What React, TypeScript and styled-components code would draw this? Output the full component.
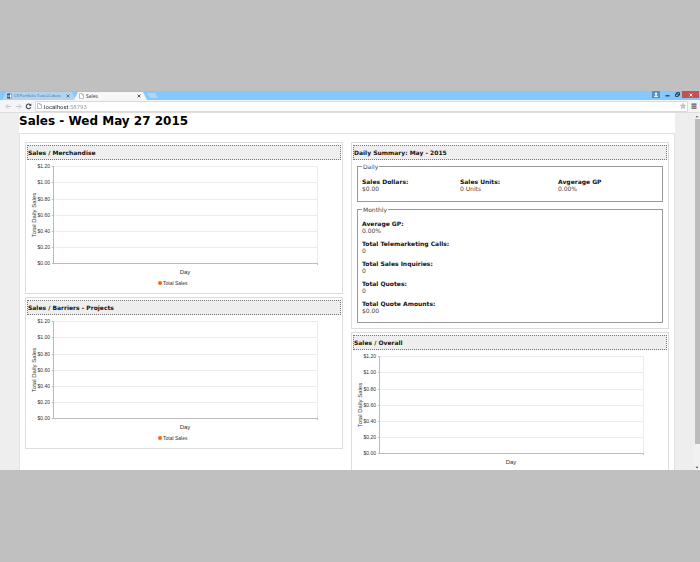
import React from "react";
import styled, { createGlobalStyle, css } from "styled-components";

const GlobalStyle = createGlobalStyle`
  * { box-sizing: border-box; }
  body {
    margin: 0;
    background: #c0c0c0;
    font-family: "DejaVu Sans", Verdana, sans-serif;
    font-size: 6px;
    line-height: 7px;
    color: #444;
  }
  button { border: 0; padding: 0; background: none; font: inherit; color: inherit; }
`;

const Desktop = styled.div`
  min-height: 100vh;
  display: flex;
  flex-direction: column;
  justify-content: center;
  padding-bottom: 1px;
`;

const BrowserWindow = styled.div`
  display: flex;
  flex-direction: column;
  background: #eee;
`;

const TabStrip = styled.div`
  display: flex;
  align-items: flex-end;
  height: 9px;
  padding-left: 2px;
  background: #84c8ff;
`;

const Tab = styled.button<{ $active?: boolean }>`
  display: flex;
  align-items: center;
  gap: 2px;
  width: ${(p) => (p.$active ? 73 : 74)}px;
  height: 8px;
  padding: 0 6px 0 5px;
  margin-right: -2px;
  font-family: "Open Sans", sans-serif;
  font-size: ${(p) => (p.$active ? 5 : 4)}px;
  line-height: 8px;
  text-align: left;
  white-space: nowrap;
  clip-path: polygon(0 100%, 4px 0, calc(100% - 4px) 0, 100% 100%);
  background: ${(p) => (p.$active ? "#f7f7f7" : "#b3d4ef")};
  color: ${(p) => (p.$active ? "#333" : "#4d6378")};
`;

const TabTitle = styled.span`
  flex: 1;
`;

const NewTab = styled.button`
  width: 11px;
  height: 5px;
  margin: 0 0 2px 2px;
  border-radius: 1px;
  clip-path: polygon(0 0, calc(100% - 3px) 0, 100% 100%, 3px 100%);
  background: #b3d4ef;
`;

const WindowControls = styled.div`
  display: flex;
  align-self: flex-start;
  margin-left: auto;
  padding-right: 1px;
`;

const WindowButton = styled.button<{ $kind?: "user" | "close" }>`
  display: flex;
  align-items: center;
  justify-content: center;
  width: 10px;
  height: 7px;
  ${(p) => p.$kind === "user" && css`width: 8px; margin-right: 2px; background: #5a8db8;`}
  ${(p) => p.$kind === "close" && css`width: 17px; background: #c75050;`}
`;

const Toolbar = styled.div`
  display: flex;
  align-items: center;
  height: 13px;
  padding: 0 3px 0 5px;
  background: #f5f5f5;
  border-bottom: 1px solid #ddd;
`;

const NavButton = styled.button`
  display: flex;
  width: 8px;
  margin-right: 2px;
`;

const AddressBar = styled.label`
  display: flex;
  align-items: center;
  flex: 1;
  gap: 2px;
  height: 11px;
  padding: 0 1px;
  margin-right: 3px;
  background: #fff;
  border: 1px solid #dadada;
  border-radius: 1px;
`;

const AddressInput = styled.input`
  flex: 1;
  min-width: 0;
  height: 9px;
  padding: 0;
  border: 0;
  outline: 0;
  font-family: Roboto, sans-serif;
  font-size: 6px;
  color: transparent;
  background: linear-gradient(90deg, #222 24px, #999 24px);
  background-clip: text;
  -webkit-background-clip: text;
`;

const Viewport = styled.div`
  display: flex;
  height: 357px;
  overflow: hidden;
`;

const Page = styled.main`
  flex: 1;
  min-width: 0;
  padding: 0 19px;
`;

const PageTitle = styled.h1`
  margin: 0;
  height: 20px;
  background: #fff;
  color: #000;
  font-size: 12px;
  line-height: 16px;
`;

const Board = styled.div`
  display: grid;
  grid-template-columns: 1fr 1fr;
  align-items: start;
  gap: 8px;
  min-height: 360px;
  padding: 8px 5px;
  background: #fff;
  border: 1px solid #e2e2e2;
`;

const Column = styled.div`
  display: flex;
  flex-direction: column;
  gap: 3px;
  min-width: 0;
`;

const Panel = styled.section`
  padding: 2px 1px 0;
  border: 1px solid #ddd;
`;

const PanelTitle = styled.h2`
  margin: 0;
  height: 15px;
  border: 1px dotted #777;
  background: #eee;
  color: #111;
  font-size: 6px;
  line-height: 13px;
`;

const ChartSvg = styled.svg`
  display: block;
  width: 100%;
  font-family: "Liberation Sans", Arial, sans-serif;
  font-size: 5px;
  fill: #333;
`;

const AxisTitle = styled.text`
  font-size: 6px;
  text-anchor: middle;
`;

const SummaryBody = styled.div`
  display: flex;
  flex-direction: column;
  gap: 4px;
  padding: 3px 4px 5px;
`;

const Group = styled.fieldset<{ $columns?: number }>`
  display: grid;
  grid-template-columns: repeat(${(p) => p.$columns ?? 1}, 1fr);
  gap: 6px;
  margin: 0;
  min-width: 0;
  padding: ${(p) => (p.$columns ? "8px 12px 9px 4px" : "7px 12px 8px 4px")};
  border: 1px solid #999;
`;

const GroupName = styled.legend`
  padding: 0 1px;
`;

const Stat = styled.dl`
  margin: 0;
`;

const StatLabel = styled.dt`
  font-weight: bold;
  color: #111;
`;

const StatValue = styled.dd`
  margin: 0;
`;

const Scrollbar = styled.div`
  display: flex;
  flex-direction: column;
  align-items: center;
  width: 6px;
  background: #f1f1f1;
`;

const ScrollButton = styled.button`
  display: flex;
  align-items: center;
  justify-content: center;
  width: 6px;
  height: 6px;
`;

const ScrollThumb = styled.div`
  width: 5px;
  height: 325px;
  margin-bottom: auto;
  background: #bcbcbc;
`;

const ticks = ["$1.20", "$1.00", "$0.80", "$0.60", "$0.40", "$0.20", "$0.00"];
const tickY = [6, 22, 39, 55, 71, 87, 103];

const monthly = [
  ["Average GP:", "0.00%"],
  ["Total Telemarketing Calls:", "0"],
  ["Total Sales Inquiries:", "0"],
  ["Total Quotes:", "0"],
  ["Total Quote Amounts:", "$0.00"],
];

const daily = [
  ["Sales Dollars:", "$0.00"],
  ["Sales Units:", "0 Units"],
  ["Avgerage GP", "0.00%"],
];

function Stats({ items }: { items: string[][] }) {
  return (
    <>
      {items.map(([label, value]) => (
        <Stat key={label}>
          <StatLabel>{label}</StatLabel>
          <StatValue>{value}</StatValue>
        </Stat>
      ))}
    </>
  );
}

function ChartPanel({ title, legend = false }: { title: string; legend?: boolean }) {
  return (
    <Panel>
      <PanelTitle>{title}</PanelTitle>
      <ChartSvg viewBox="0 0 314 133" role="img" aria-label={`${title} chart`}>
        {ticks.map((t, i) => (
          <g key={t}>
            <rect x="25" y={tickY[i]} width="265" height="1" fill={i === 6 ? "#bbb" : "#ececec"} />
            <rect x="25" y={tickY[i]} width="2" height="1" fill="#bbb" />
            <text x="23" y={tickY[i] + 2} textAnchor="end">{t}</text>
          </g>
        ))}
        <rect x="26" y="6" width="1" height="98" fill="#bbb" />
        <rect x="290" y="6" width="1" height="98" fill="#ececec" />
        <rect x="290" y="103" width="1" height="2" fill="#bbb" />
        <AxisTitle transform="translate(9 55) rotate(-90)">Total Daily Sales</AxisTitle>
        <AxisTitle x="158" y="114">Day</AxisTitle>
        {legend && (
          <>
            <circle cx="133" cy="123" r="2" fill="#f60" />
            <text x="136" y="125">Total Sales</text>
          </>
        )}
      </ChartSvg>
    </Panel>
  );
}

function PageIcon() {
  return (
    <svg width="5" height="6" viewBox="0 0 5 6" fill="#fff" stroke="#999" strokeWidth=".6">
      <path d="M.5.4h2.4l1.6 1.6v3.6h-4zM2.9.4v1.6h1.6" />
    </svg>
  );
}

function CloseIcon({ color }: { color: string }) {
  return (
    <svg width="4" height="4" viewBox="0 0 4 4" stroke={color} strokeWidth=".9">
      <path d="M.6.6l2.8 2.8M3.4.6L.6 3.4" />
    </svg>
  );
}

export default function App() {
  return (
    <Desktop>
      <GlobalStyle />
      <BrowserWindow>
        <TabStrip>
          <Tab>
            <svg width="5" height="6" viewBox="0 0 5 6">
              <path d="M0 .8L3 .2v5.6L0 5.2z" fill="#2b579a" />
              <path d="M3 1h1.7v4H3" fill="#fff" stroke="#2b579a" strokeWidth=".5" />
              <path d="M.5 2l.5 2 .5-1.6L2 4l.5-2" fill="none" stroke="#fff" strokeWidth=".4" />
            </svg>
            <TabTitle>C9 Portfolio Text-LC.docx</TabTitle>
            <CloseIcon color="#567" />
          </Tab>
          <Tab $active>
            <PageIcon />
            <TabTitle>Sales</TabTitle>
            <CloseIcon color="#444" />
          </Tab>
          <NewTab aria-label="New tab" />
          <WindowControls>
            <WindowButton $kind="user" aria-label="User">
              <svg width="6" height="6" viewBox="0 0 6 6" fill="#e9f3fb">
                <circle cx="3" cy="1.8" r="1.2" />
                <path d="M1 5c0-2.4 4-2.4 4 0z" />
              </svg>
            </WindowButton>
            <WindowButton aria-label="Minimize">
              <svg width="5" height="5" viewBox="0 0 5 5"><path d="M.5 3.2h4v1.2h-4z" fill="#234" /></svg>
            </WindowButton>
            <WindowButton aria-label="Restore">
              <svg width="5" height="5" viewBox="0 0 5 5" fill="none" stroke="#234" strokeWidth=".9">
                <path d="M.5 2h2.8v2.4H.5zM1.6 2V.6h2.9v2.6H3.3" />
              </svg>
            </WindowButton>
            <WindowButton $kind="close" aria-label="Close"><CloseIcon color="#fff" /></WindowButton>
          </WindowControls>
        </TabStrip>
        <Toolbar>
          <NavButton aria-label="Back">
            <svg width="7" height="7" viewBox="0 0 7 7" fill="none" stroke="#c6c6c6" strokeWidth="1"><path d="M6.2 3.5H1M3.2 1.2L.9 3.5l2.3 2.3" /></svg>
          </NavButton>
          <NavButton aria-label="Forward">
            <svg width="7" height="7" viewBox="0 0 7 7" fill="none" stroke="#c6c6c6" strokeWidth="1"><path d="M.8 3.5H6M3.8 1.2l2.3 2.3-2.3 2.3" /></svg>
          </NavButton>
          <NavButton aria-label="Reload">
            <svg width="7" height="7" viewBox="0 0 7 7" fill="none" stroke="#444" strokeWidth="1.1"><path d="M5.4 2A2.3 2.3 0 1 0 5.7 4.2" /><path d="M6.3.6v2.5H3.8z" fill="#444" stroke="none" /></svg>
          </NavButton>
          <AddressBar>
            <PageIcon />
            <AddressInput aria-label="Address" defaultValue="localhost:58793" />
            <svg width="6" height="6" viewBox="0 0 12 12"><path d="M6 .5l1.7 3.6 3.9.5-2.9 2.7.8 3.9L6 9.3l-3.5 1.9.8-3.9L.4 4.6l3.9-.5z" fill="#ccc" stroke="#aaa" /></svg>
          </AddressBar>
          <button aria-label="Menu">
            <svg display="block" width="6" height="6" viewBox="0 0 6 6" fill="#555"><path d="M.5.5h5v1.2h-5zM.5 2.5h5v1.2h-5zM.5 4.5h5v1.2h-5z" /></svg>
          </button>
        </Toolbar>
        <Viewport>
          <Page>
            <PageTitle>Sales - Wed May 27 2015</PageTitle>
            <Board>
              <Column>
                <ChartPanel title="Sales / Merchandise" legend />
                <ChartPanel title="Sales / Barriers - Projects" legend />
              </Column>
              <Column>
                <Panel>
                  <PanelTitle>Daily Summary: May - 2015</PanelTitle>
                  <SummaryBody>
                    <Group $columns={3}>
                      <GroupName>Daily</GroupName>
                      <Stats items={daily} />
                    </Group>
                    <Group>
                      <GroupName>Monthly</GroupName>
                      <Stats items={monthly} />
                    </Group>
                  </SummaryBody>
                </Panel>
                <ChartPanel title="Sales / Overall" />
              </Column>
            </Board>
          </Page>
          <Scrollbar>
            <ScrollButton aria-label="Scroll up">
              <svg width="4" height="3" viewBox="0 0 4 3"><path d="M.4 2.3L2 .7l1.6 1.6z" fill="#555" /></svg>
            </ScrollButton>
            <ScrollThumb />
            <ScrollButton aria-label="Scroll down">
              <svg width="4" height="3" viewBox="0 0 4 3"><path d="M.4.7L2 2.3 3.6.7z" fill="#333" /></svg>
            </ScrollButton>
          </Scrollbar>
        </Viewport>
      </BrowserWindow>
    </Desktop>
  );
}
